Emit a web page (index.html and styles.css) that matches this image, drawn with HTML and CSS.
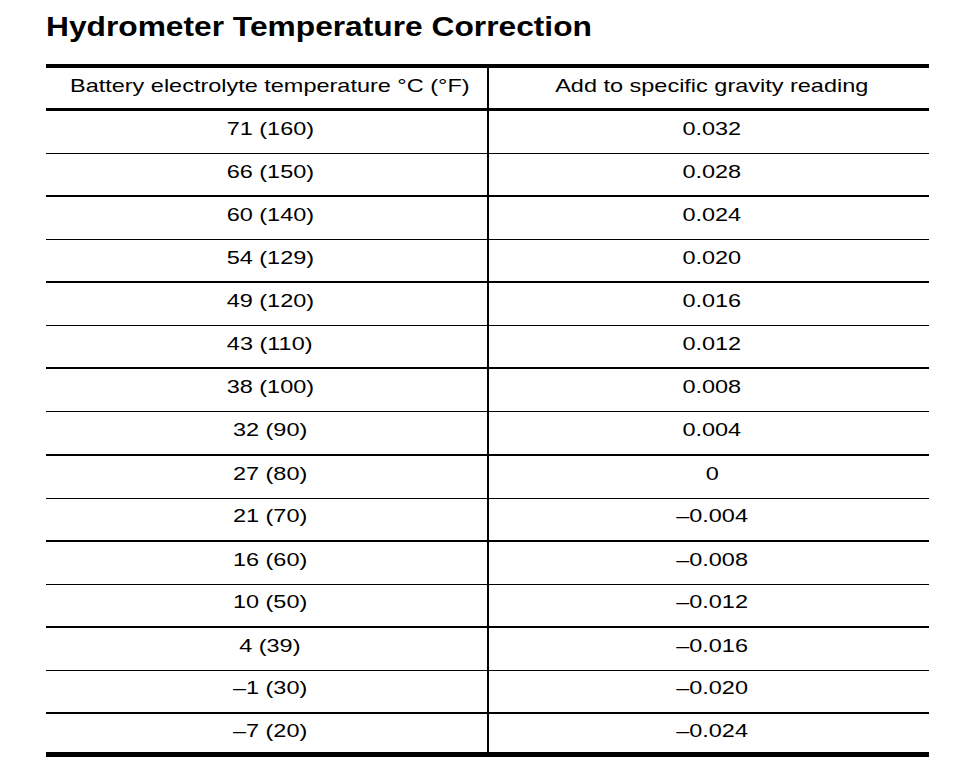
FILE: index.html
```html
<!DOCTYPE html>
<html lang="en">
<head>
<meta charset="utf-8">
<title>Hydrometer Temperature Correction</title>
<link rel="stylesheet" href="styles.css">
</head>
<body>
<main class="page">
  <h1 class="title"><span class="wide-t">Hydrometer Temperature Correction</span></h1>
  <table class="corr">
    <colgroup><col class="c1"><col class="c2"></colgroup>
    <thead>
      <tr><th><span class="wide">Battery electrolyte temperature °C (°F)</span></th><th><span class="wide">Add to specific gravity reading</span></th></tr>
    </thead>
    <tbody>
      <tr><td><span class="wide">71 (160)</span></td><td><span class="wide">0.032</span></td></tr>
      <tr><td><span class="wide">66 (150)</span></td><td><span class="wide">0.028</span></td></tr>
      <tr><td><span class="wide">60 (140)</span></td><td><span class="wide">0.024</span></td></tr>
      <tr><td><span class="wide">54 (129)</span></td><td><span class="wide">0.020</span></td></tr>
      <tr><td><span class="wide">49 (120)</span></td><td><span class="wide">0.016</span></td></tr>
      <tr><td><span class="wide">43 (110)</span></td><td><span class="wide">0.012</span></td></tr>
      <tr><td><span class="wide">38 (100)</span></td><td><span class="wide">0.008</span></td></tr>
      <tr><td><span class="wide">32 (90)</span></td><td><span class="wide">0.004</span></td></tr>
      <tr><td><span class="wide">27 (80)</span></td><td><span class="wide">0</span></td></tr>
      <tr><td><span class="wide">21 (70)</span></td><td><span class="wide">–0.004</span></td></tr>
      <tr><td><span class="wide">16 (60)</span></td><td><span class="wide">–0.008</span></td></tr>
      <tr><td><span class="wide">10 (50)</span></td><td><span class="wide">–0.012</span></td></tr>
      <tr><td><span class="wide">4 (39)</span></td><td><span class="wide">–0.016</span></td></tr>
      <tr><td><span class="wide">–1 (30)</span></td><td><span class="wide">–0.020</span></td></tr>
      <tr><td><span class="wide">–7 (20)</span></td><td><span class="wide">–0.024</span></td></tr>
    </tbody>
  </table>
</main>
</body>
</html>
```
FILE: styles.css
```css
html, body {
  margin: 0;
  padding: 0;
  background: #fff;
  color: #000;
}

.page {
  padding: 11px 0 0 46px;
  font-family: "Liberation Sans", Arial, Helvetica, sans-serif;
}

.title {
  margin: 0 0 21px 0;
  font-size: 28px;
  line-height: 32px;
  font-weight: bold;
  white-space: nowrap;
}

.wide-t {
  display: inline-block;
  transform: scaleX(1.133);
  transform-origin: left center;
}

.corr {
  width: 883px;
  table-layout: fixed;
  border-collapse: separate;
  border-spacing: 0;
  border-top: 4px solid #000;
  border-bottom: 5px solid #000;
  font-size: 19px;
}

.c1 { width: 443px; }
.c2 { width: 440px; }

.corr th,
.corr td {
  padding: 0 0 6px 0;
  text-align: center;
  vertical-align: middle;
  font-weight: normal;
  white-space: nowrap;
  line-height: 22px;
}

.corr th:first-child,
.corr td:first-child {
  border-right: 2px solid #000;
  padding-left: 7px;
}

.corr th:last-child,
.corr td:last-child {
  padding-left: 6px;
}

.corr thead th {
  height: 43px;
  padding-bottom: 4px;
  box-sizing: border-box;
  border-bottom: 3px solid #000;
}

.corr tbody td {
  height: 43.07px;
  box-sizing: border-box;
  border-bottom: 1px solid #000;
}

.corr tbody tr:nth-child(even) td {
  border-bottom-width: 2px;
}

.corr tbody tr:last-child td {
  height: 38px;
  padding-bottom: 4px;
  border-bottom: 0;
}

.wide {
  display: inline-block;
  transform: scaleX(1.235);
}
```
